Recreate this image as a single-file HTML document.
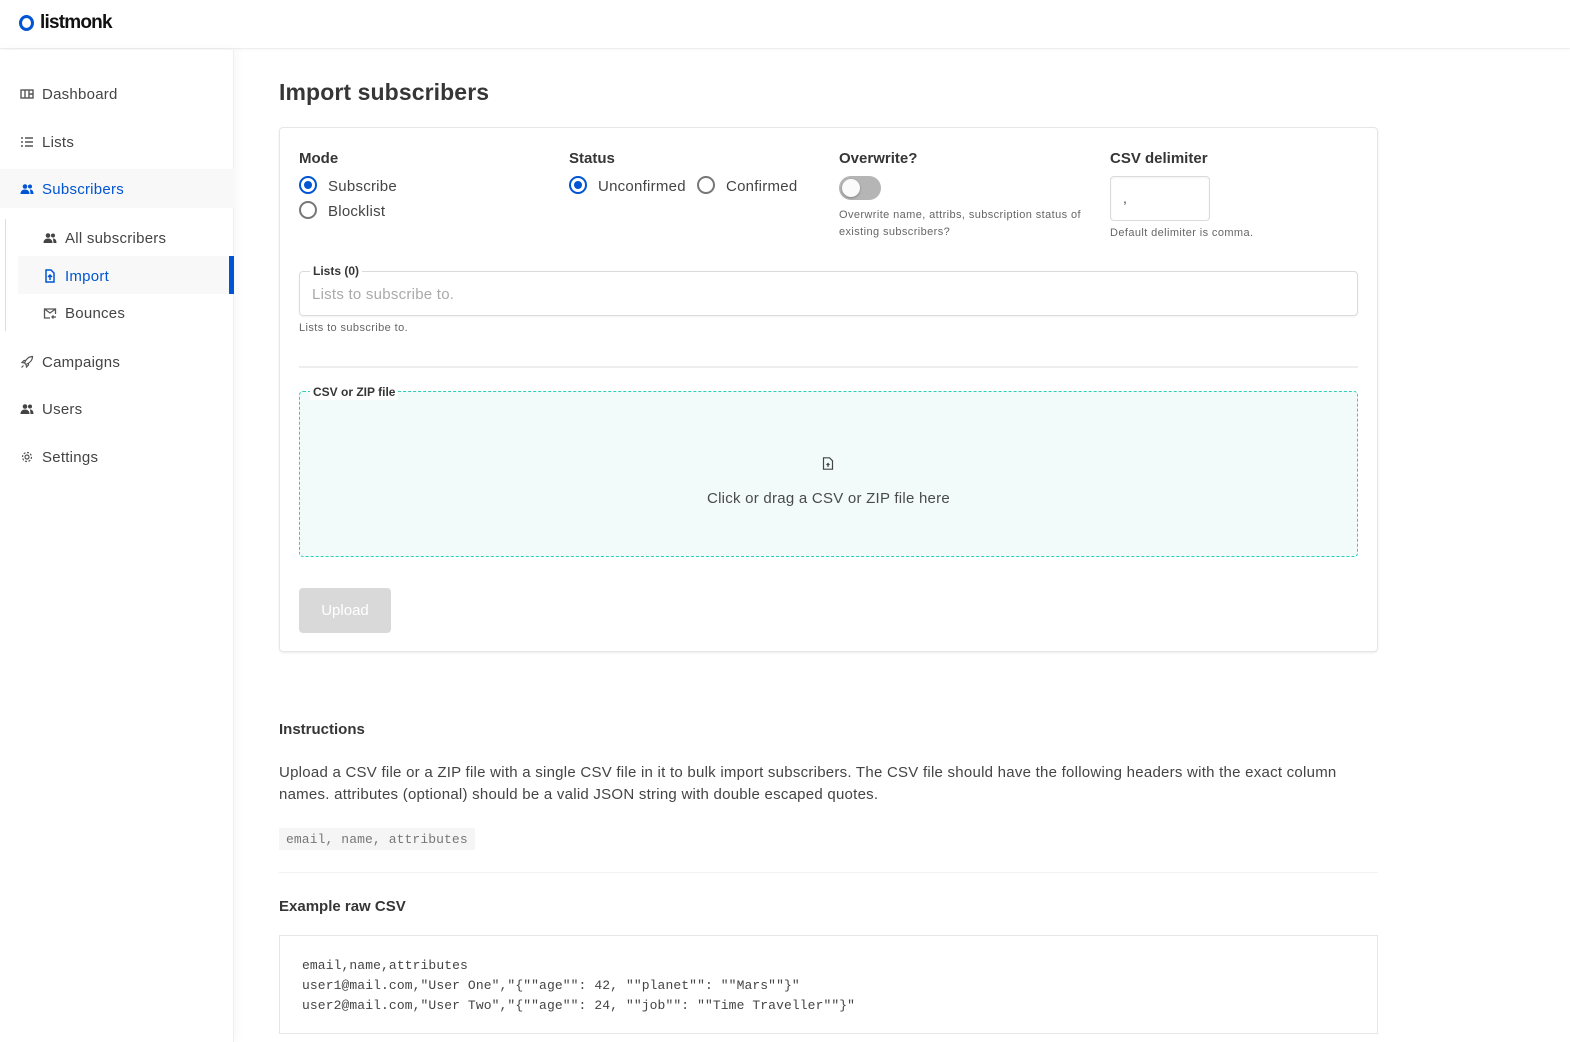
<!DOCTYPE html>
<html><head><meta charset="utf-8">
<style>
*{box-sizing:border-box;margin:0;padding:0}
body{width:1570px;height:1042px;overflow:hidden;background:#fff;font-family:"Liberation Sans",sans-serif;color:#444;position:relative}
.a{position:absolute;white-space:nowrap}
.hdr{left:0;top:0;width:1570px;height:49px;border-bottom:1px solid #eee;box-shadow:0 1px 3px rgba(0,0,0,.04)}
.side{left:0;top:50px;width:234px;height:992px;background:#fff;border-right:1px solid #eee;box-shadow:2px 0 10px rgba(0,0,0,.04)}
.nav{font-size:15px;color:#444;letter-spacing:.25px;margin-top:1px}
.ic{position:absolute;width:14px;height:14px}
.lbl{font-size:15px;font-weight:bold;color:#363636;margin-top:1px}
.t15{font-size:15px;color:#444;letter-spacing:.25px;margin-top:1px}
.help{font-size:11px;color:#666;line-height:17px;letter-spacing:.4px;margin-top:1px}
.radio{position:absolute;width:18px;height:18px;border:2px solid #777;border-radius:50%}
.radio.on{border-color:#0055d4}
.radio.on:after{content:"";position:absolute;left:3px;top:3px;width:8px;height:8px;border-radius:50%;background:#0055d4}
.mono{font-family:"Liberation Mono",monospace;font-size:13px;letter-spacing:.1px}
</style></head><body>
<div class="a hdr"></div>
<div class="a" style="left:19px;top:15px;width:15px;height:16px;border:3.5px solid #0055d4;border-radius:50%"></div>
<div class="a" style="left:40px;top:12px;font-size:19px;font-weight:bold;color:#111;letter-spacing:-0.8px">listmonk</div>

<div class="a side"></div>
<div class="a" style="left:0;top:169px;width:234px;height:39px;background:#f8f8f8"></div>
<div class="a" style="left:18px;top:256px;width:216px;height:38px;background:#f8f8f8"></div>
<div class="a" style="left:229px;top:256px;width:5px;height:38px;background:#0055d4"></div>
<div class="a" style="left:5px;top:219px;width:1px;height:112px;background:#ddd"></div>

<svg class="ic" style="left:20px;top:87px" viewBox="0 0 14 14"><rect x="1" y="3" width="12" height="8" fill="none" stroke="#555" stroke-width="1.4"/><path d="M5 3v8M9 3v8M9 7h4" stroke="#555" stroke-width="1.4"/></svg>
<div class="a nav" style="left:42px;top:85px">Dashboard</div>
<svg class="ic" style="left:20px;top:135px" viewBox="0 0 14 14"><path d="M1 3h2M1 7h2M1 11h2M5 3h8M5 7h8M5 11h8" stroke="#555" stroke-width="1.6"/></svg>
<div class="a nav" style="left:42px;top:133px">Lists</div>
<svg class="ic" style="left:20px;top:182px" viewBox="0 0 14 14"><circle cx="5" cy="4.5" r="2.3" fill="#0055d4"/><circle cx="10" cy="4.5" r="2" fill="#0055d4"/><path d="M0.5 12c0-3 2-4.5 4.5-4.5S9.5 9 9.5 12zM10 7.5c2 0 3.5 1.3 3.5 4.5H10.5" fill="#0055d4"/></svg>
<div class="a nav" style="left:42px;top:180px;color:#0055d4">Subscribers</div>
<svg class="ic" style="left:43px;top:231px" viewBox="0 0 14 14"><circle cx="5" cy="4.5" r="2.3" fill="#444"/><circle cx="10" cy="4.5" r="2" fill="#444"/><path d="M0.5 12c0-3 2-4.5 4.5-4.5S9.5 9 9.5 12zM10 7.5c2 0 3.5 1.3 3.5 4.5H10.5" fill="#444"/></svg>
<div class="a nav" style="left:65px;top:229px">All subscribers</div>
<svg class="ic" style="left:43px;top:269px" viewBox="0 0 14 14"><path d="M3 1h5l3 3v9H3z" fill="none" stroke="#0055d4" stroke-width="1.5"/><path d="M7 11V6M5 8l2-2 2 2" stroke="#0055d4" stroke-width="1.5" fill="none"/></svg>
<div class="a nav" style="left:65px;top:267px;color:#0055d4">Import</div>
<svg class="ic" style="left:43px;top:306px" viewBox="0 0 14 14"><path d="M7 12H1.5V3h11v5M1.5 3l5.5 4 5.5-4M13 11H9M10.5 9.5 9 11l1.5 1.5" fill="none" stroke="#555" stroke-width="1.3"/></svg>
<div class="a nav" style="left:65px;top:304px">Bounces</div>
<svg class="ic" style="left:20px;top:355px" viewBox="0 0 14 14"><path d="M12.5 1.5C9 1.5 6 4 4.5 8l1.5 1.5C10 8 12.5 5 12.5 1.5zM4.5 8 2 7.5 4 5.5h2M6 9.5l.5 2.5 2-2V8M3.5 10.5 1.5 12.5" fill="none" stroke="#555" stroke-width="1.2"/></svg>
<div class="a nav" style="left:42px;top:353px">Campaigns</div>
<svg class="ic" style="left:20px;top:402px" viewBox="0 0 14 14"><circle cx="5" cy="4.5" r="2.3" fill="#444"/><circle cx="10" cy="4.5" r="2" fill="#444"/><path d="M0.5 12c0-3 2-4.5 4.5-4.5S9.5 9 9.5 12zM10 7.5c2 0 3.5 1.3 3.5 4.5H10.5" fill="#444"/></svg>
<div class="a nav" style="left:42px;top:400px">Users</div>
<svg class="ic" style="left:20px;top:450px" viewBox="0 0 14 14"><circle cx="7" cy="7" r="2" fill="none" stroke="#555" stroke-width="1.2"/><circle cx="7" cy="7" r="4.5" fill="none" stroke="#555" stroke-width="1.2" stroke-dasharray="2 1.5"/></svg>
<div class="a nav" style="left:42px;top:448px">Settings</div>

<div class="a" style="left:279px;top:79px;font-size:23px;font-weight:bold;color:#363636;letter-spacing:.1px">Import subscribers</div>

<div class="a" style="left:279px;top:127px;width:1099px;height:525px;border:1px solid #e6e6e6;border-radius:4px;box-shadow:0 1px 2px rgba(0,0,0,.08)"></div>

<div class="a lbl" style="left:299px;top:149px">Mode</div>
<div class="radio on" style="left:299px;top:176px"></div><div class="a t15" style="left:328px;top:177px">Subscribe</div>
<div class="radio" style="left:299px;top:201px"></div><div class="a t15" style="left:328px;top:202px">Blocklist</div>

<div class="a lbl" style="left:569px;top:149px">Status</div>
<div class="radio on" style="left:569px;top:176px"></div><div class="a t15" style="left:598px;top:177px">Unconfirmed</div>
<div class="radio" style="left:697px;top:176px"></div><div class="a t15" style="left:726px;top:177px">Confirmed</div>

<div class="a lbl" style="left:839px;top:149px">Overwrite?</div>
<div class="a" style="left:839px;top:176px;width:42px;height:24px;border-radius:12px;background:#b5b5b5"></div>
<div class="a" style="left:842px;top:179px;width:18px;height:18px;border-radius:50%;background:#fafafa;box-shadow:0 1px 2px rgba(0,0,0,.3)"></div>
<div class="a help" style="left:839px;top:206px">Overwrite name, attribs, subscription status of<br>existing subscribers?</div>

<div class="a lbl" style="left:1110px;top:149px">CSV delimiter</div>
<div class="a" style="left:1110px;top:176px;width:100px;height:45px;border:1px solid #dbdbdb;border-radius:4px;box-shadow:inset 0 1px 2px rgba(0,0,0,.05);font-size:14px;padding:13px 12px">,</div>
<div class="a help" style="left:1110px;top:224px">Default delimiter is comma.</div>

<div class="a" style="left:299px;top:271px;width:1059px;height:45px;border:1px solid #dbdbdb;border-radius:4px;box-shadow:0 1px 2px rgba(0,0,0,.05)"></div>
<div class="a" style="left:310px;top:264px;background:#fff;padding:0 3px;font-size:12px;font-weight:bold;color:#363636">Lists (0)</div>
<div class="a t15" style="left:312px;top:285px;color:#aaa">Lists to subscribe to.</div>
<div class="a help" style="left:299px;top:319px">Lists to subscribe to.</div>

<div class="a" style="left:299px;top:366px;width:1059px;height:2px;background:#eee"></div>

<div class="a" style="left:299px;top:391px;width:1059px;height:166px;border:1px dashed #2ad0b8;border-radius:4px;background:#f2fbfa"></div>
<div class="a" style="left:310px;top:384px;background:#fff;padding:0 3px;font-size:12px;font-weight:bold;color:#363636;line-height:16px">CSV or ZIP file</div>
<svg class="a" style="left:822px;top:457px;width:12px;height:13px" viewBox="0 0 12 13"><path d="M1.5 .8h6l3 3v8.4h-9z" fill="none" stroke="#444" stroke-width="1.2"/><path d="M6 10V6.5M4.5 8 6 6.5 7.5 8" stroke="#444" stroke-width="1.2" fill="none"/></svg>
<div class="a t15" style="left:299px;top:489px;width:1059px;text-align:center;color:#4a4a4a">Click or drag a CSV or ZIP file here</div>

<div class="a" style="left:299px;top:588px;width:92px;height:45px;border-radius:4px;background:#d9d9d9;color:#fff;font-size:15px;text-align:center;line-height:46px">Upload</div>

<div class="a lbl" style="left:279px;top:720px">Instructions</div>
<div class="a t15" style="left:279px;top:761px;white-space:normal;width:1098px;line-height:22px">Upload a CSV file or a ZIP file with a single CSV file in it to bulk import subscribers. The CSV file should have the following headers with the exact column names. attributes (optional) should be a valid JSON string with double escaped quotes.</div>
<div class="a mono" style="left:279px;top:828px;height:22px;padding:4px 7px;background:#f5f5f5;color:#777">email, name, attributes</div>
<div class="a" style="left:279px;top:872px;width:1099px;height:1px;background:#f2f2f2"></div>
<div class="a lbl" style="left:279px;top:897px">Example raw CSV</div>
<div class="a" style="left:279px;top:935px;width:1099px;height:99px;border:1px solid #e6e6e6"></div>
<div class="a mono" style="left:302px;top:956px;line-height:20px;color:#444">email,name,attributes<br>user1@mail.com,"User One","{""age"": 42, ""planet"": ""Mars""}"<br>user2@mail.com,"User Two","{""age"": 24, ""job"": ""Time Traveller""}"</div>
</body></html>
